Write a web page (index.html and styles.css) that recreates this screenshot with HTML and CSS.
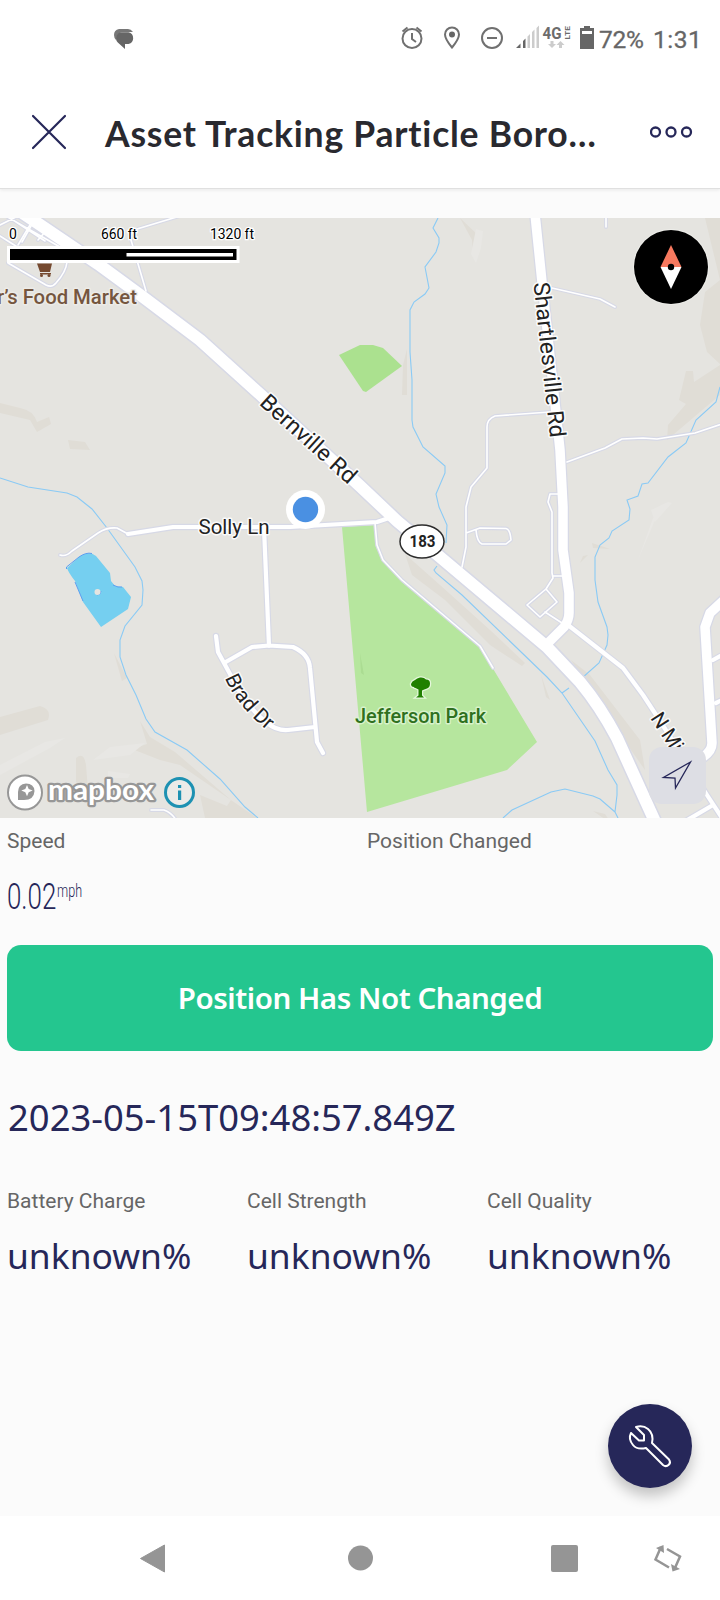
FILE: index.html
```html
<!DOCTYPE html>
<html lang="en">
<head>
<meta charset="utf-8">
<title>Asset Tracking</title>
<link rel="stylesheet" href="styles.css">
</head>
<body>
<header class="top">
  <div class="status">
    <svg class="status-icons" viewBox="0 0 599 76" width="599" height="76">
      <path class="faded" d="M119 29h9q3 0 5 3h-11q-5 1-6 8-2-2-2-5 0-5 5-6z"/>
      <path class="solid" d="M122.500 32.300h6a6 6 0 0 1 0 11.700h-3.500v5l-7.200-6.500a6 6 0 0 1 4.700-10.200z"/>
      <g class="line">
        <circle cx="412" cy="38.500" r="9.500"/><path d="M412 33v6l4 3M402.500 31.500l5-4M421.500 31.500l-5-4"/>
        <path d="M452 47.500q-7-8.500-7-13a7 7 0 0 1 14 0q0 4.500-7 13z"/>
        <circle cx="492" cy="38" r="10"/><path d="M487 38h10"/>
      </g>
      <circle class="solid" cx="452" cy="34.500" r="3"/>
      <path class="solid" d="M516 48l4.500-4.500v4.500zM523 48v-7l2.500-2.500v9.500z"/>
      <path class="pale" d="M527.500 48V36.500l2.500-2.500v14zM532 48V32l2.500-2.500v18.500zM536.500 48V28l2.500-2.500v22.500z"/>
      <text class="net" x="542.500" y="38.500" textLength="19" lengthAdjust="spacingAndGlyphs">4G</text>
      <text class="lte" transform="translate(569.500 39.500) rotate(-90)" textLength="13.500" lengthAdjust="spacingAndGlyphs">LTE</text>
      <path class="pale" d="M550.500 41h3v3h2.500l-4 4-4-4h2.500zM559 48h3v-3h2.500l-4-4-4 4h2.500z"/>
      <path class="solid" fill-rule="evenodd" d="M584 26h6v2h4v21h-14V28h4zM582 31v3h10v-3z"/>
    </svg>
    <span class="battery">72%</span>
    <span class="clock">1:31</span>
  </div>
  <div class="titlebar">
    <svg class="close" viewBox="0 0 36 36" width="36" height="36"><path d="M2 2l32 32M34 2L2 34"/></svg>
    <h1>Asset Tracking Particle Boro…</h1>
    <svg class="more" viewBox="0 0 44 12" width="44" height="12"><circle cx="5.500" cy="6" r="4.500"/><circle cx="21" cy="6" r="4.500"/><circle cx="36.500" cy="6" r="4.500"/></svg>
  </div>
</header>
<main>
  <section class="map">
    <svg viewBox="0 218 720 600" width="720" height="600">
      <defs>
        <g id="highway"><path d="M18 210L30 218 98 264 143 297 200 340 262 396 360 486 397 521 440 557 547 647 580 682 Q600 706 617 738 L657 826"/></g>
        <g id="avenue"><path d="M535 214L542 282 560 450 563 507 563 550 569 593V613Q569 620 564 627L545 646"/></g>
        <g id="east"><path d="M724 600L710 613 705 627 712 743 Q712 751 703 757"/></g>
        <g id="street">
          <path d="M128 534L173 527H290L377 522 392 517M264 528L269 646M216 636L218 652 230 674 Q245 706 267 723 Q277 731 288 730L315 727M224 663L252 647 269 645.500 293 647Q309 654 310 668L317 742 323 753"/>
          <path d="M568 625L623 668 643 695 662 724 707 795 722 818M684 822L713 805M713 660l9-5M716 703l8-4"/>
        </g>
        <g id="lane">
          <path d="M60 555Q66 557 72 551L98 533Q107 527 117 528L128 534M550 412L495 416Q487 419 487 427V468L471 487 466 507V547L462 567M466 533L480 528 506 528.500Q510 529 511 540L506 544H482Q477 542 476 530"/>
          <path d="M567 462L605 448 622 439 643 438 657 439 695 433 722 424M552 288L600 299 615 307M606 216V227M558 494H550L548 502 552 512V573L553 578 546 589 557 602 540 617 527 605 546 589M553 576H562M545 612L562 623"/>
          <path d="M375 523L377 545 383 560 402 580 480 646 493 668M137 229L180 216M131 240L146 291M8 263L46 285Q52 288 56 283Q66 272 67 262M0 236L30 255M4 215L60 247 68 242M18 245L30 225M0 225L20 215M10 218L45 241"/>
          <path d="M151 810H164Q172 813 176 820M22 242l9-16M38 240l7-8"/>
        </g>
      </defs>
      <rect class="land" y="218" width="720" height="600"/>
      <g class="hill">
        <path d="M0 403L20 408Q33 410 37 422L49 417 51 424 37 432 30 420 0 413zM68 440L85 442 90 450 70 449zM0 717L40 706Q52 709 48 720L0 735zM76 758Q84 751 86 765L88 790 76 782zM140 721L150 737 175 752 231 800 227 806 200 795 205 818H257L180 765 160 760 132 749 147 744zM114 653L127 678 122 681zM460 218L480 237 478 256 473 254 472 240zM407 349V395H402L403 365zM705 218H720V364L707 352 700 325 705 292 720 280zM686 371H693L694 382 720 365V395L667 440 668 425 686 404 679 400zM405 554L440 585 490 630 525 663 522 666 490 645 445 600 412 575zM571 660L590 675 640 740 645 770 610 720zM541 675L550 700 546 697zM592 543L610 549 593 548zM583 556L588 555 580 563zM593 811L605 814 612 824z"/>
      </g>
      <g class="shine"><path d="M93 760L110 747 145 743 130 755zM0 765L45 742 65 738 50 748 0 775zM638 560L653 518 665 510 655 520zM651 510L668 502 672 503 655 522zM108 771L130 774 128 778H108zM476 229L483 231 481 248 476 263 471 254z"/></g>
      <path class="park small" d="M339 355L360 345H373L383 348 402 366 366 392 363 391z"/>
      <path class="park" d="M342 527L374 525 376 547 383 560 402 581 480 647 537 742 507 770 367 812z"/>
      <path class="parkshade" d="M360 653l4 22-3-2z"/>
      <path class="lake" d="M67 568L79 557Q89 550 96 556L110 573 111 581 115 586 123 587 131 597 128 609 101 627 83 602 75 581Q68 572 67 568z"/>
      <path class="shore" d="M66.500 569V567L79 557Q86 552 92 553.500M113 585l5 2h4M75 582l8 19M97 595q4 0 4-4"/>
      <circle class="land" cx="97.500" cy="592" r="3"/>
      <path class="water" d="M0 478L28 487 67 493 77 497 92 509 107 528 135 567 142 581 143 590 142 605 125 626 120 640V657L126 675 136 695 146 719 155 732 187 750 220 779 245 807 258 818M438 218L433 228 439 238V243L436 252 425 267 429 288 425 294 414 302 410 310V352L412 380V420L413 427 423 447 445 466V473L436 494 439 507 447 525 446 543M437 566L434 570 436 573 462 595 547 677 562 693 595 741 608 770 617 785V795L615 812 618 818M562 693L569 688M582 678L599 663 607 645 608 635 607 627 598 602 595 580V557L600 545 609 538 612 531 629 520 630 509 627 500 638 496 642 484 648 483 668 457 686 443 696 420 716 402 720 387M503 818L512 810 551 792 565 789 593 796 600 799 615 812"/>
      <use href="#lane" class="case c4"/><use href="#street" class="case c6"/><use href="#highway" class="case c14"/><use href="#avenue" class="case c11"/><use href="#east" class="case c11"/>
      <use href="#lane" class="road r2"/><use href="#street" class="road r4"/><use href="#highway" class="road r11"/><use href="#avenue" class="road r9"/><use href="#east" class="road r9"/>
      <path id="brad" fill="none" d="M225 678Q236 706 275 737"/>
      <g class="label">
        <text transform="translate(258.500 404) rotate(42)" textLength="121" lengthAdjust="spacingAndGlyphs">Bernville Rd</text>
        <text transform="translate(533.500 283) rotate(83.900)" textLength="156" lengthAdjust="spacingAndGlyphs">Shartlesville Rd</text>
        <text class="flat" x="198.500" y="534" textLength="71" lengthAdjust="spacingAndGlyphs">Solly Ln</text>
        <text class="flat"><textPath href="#brad" textLength="68" lengthAdjust="spacingAndGlyphs">Brad Dr</textPath></text>
        <text class="flat" transform="translate(650 718) rotate(57)" textLength="42">N Mi</text>
        <text class="green" x="355" y="722.500" textLength="131" lengthAdjust="spacingAndGlyphs">Jefferson Park</text>
        <text class="brown" x="-3" y="303.500" textLength="140" lengthAdjust="spacingAndGlyphs">r’s Food Market</text>
      </g>
      <path class="tree" d="M414 687q-3 0-3-3 1-3 4-4 2-2 5-2.500 4-0.500 6 2 4 0 4 4 0 4-3 5-3 1-5 2v5l2 2h-8l2.500-2v-6l-3-1.500q-1.500 0-1.500-1z"/>
      <path class="cart" d="M37 263.500h15l-2 8.500H40zM40 273h11v1.500H40z"/><circle class="cart" cx="41.500" cy="275.500" r="1.500"/><circle class="cart" cx="49" cy="275.500" r="1.500"/>
      <rect class="shield" x="400" y="525" width="44" height="33" rx="22" ry="16.500"/>
      <text class="route" x="422.500" y="547" textLength="26" lengthAdjust="spacingAndGlyphs">183</text>
      <circle fill="#fff" cx="305.500" cy="509.500" r="19.500"/><circle fill="#4a90e2" cx="305.500" cy="509.500" r="12.700"/>
      <g class="scale">
        <text x="9" y="239">0</text><text x="101" y="239" textLength="36">660 ft</text><text x="210" y="239" textLength="44">1320 ft</text>
        <path fill="#fff" d="M7 246h232.500v17H7z"/><path d="M10 249h226.500v11H10z"/><path fill="#fff" d="M126.500 253H233v3.500H126.500z"/>
      </g>
      <circle class="compass" cx="671" cy="267" r="37"/>
      <path fill="#f7795f" d="M671 245l10.500 22h-21z"/><path fill="#fff" d="M671 289l10.500-22h-21z"/><circle cx="671" cy="267" r="3.200"/>
      <g class="brand">
        <circle cx="25" cy="792.500" r="17"/>
        <path d="M18 800v-8q0-8 8-8.500 8 0 8.500 7.500-0.500 9-10.500 9z" fill="#979797"/><path fill="#fff" d="M27 785l1.700 4 4 1.600-4 1.600-1.700 4-1.700-4-4-1.600 4-1.600z"/>
        <text x="48" y="800" textLength="106" lengthAdjust="spacingAndGlyphs">mapbox</text>
      </g>
      <circle class="info" cx="179.500" cy="792.500" r="14"/><path fill="#1d91b2" d="M178 785h3.200v3H178zM178 790.500h3.200v9.500H178z"/>
    </svg>
    <button class="locate" aria-label="Center map"><svg viewBox="0 0 57 57" width="57" height="57"><path d="M41.500 15L14.500 30.500 26 31 26.500 41z"/></svg></button>
  </section>
  <section class="row halves">
    <div><p class="label-text">Speed</p><p class="speed"><span class="num">0.02</span><span class="unit">mph</span></p></div>
    <div><p class="label-text">Position Changed</p></div>
  </section>
  <div class="banner"><span>Position Has Not Changed</span></div>
  <p class="stamp">2023-05-15T09:48:57.849Z</p>
  <section class="row thirds">
    <div><p class="label-text">Battery Charge</p><p class="value">unknown%</p></div>
    <div><p class="label-text">Cell Strength</p><p class="value">unknown%</p></div>
    <div><p class="label-text">Cell Quality</p><p class="value">unknown%</p></div>
  </section>
  <button class="fab" aria-label="Tools"><svg viewBox="0 0 84 84" width="84" height="84"><path d="M28 23q7-2 12 2 6 5 4 14L61 55.500q2 3 0 5-3 3-6 0.500L38 44q-9 2-13-3-5-6-2-12l8 7.500h5v-5.500z"/></svg></button>
</main>
<nav>
  <svg viewBox="0 0 720 84" width="720" height="84">
    <path d="M164.500 29v27L140.500 42.500z" stroke="#959595" stroke-linejoin="round"/><circle cx="360.500" cy="42" r="12.500"/><rect x="551" y="29" width="27" height="27" rx="2"/>
    <g class="rotate"><path d="M669 51.500L655.500 43.500 661 31M667 33L680 40.500 674.500 53"/></g><path d="M656 32l7.500-3 .5 8zM671 48l1.500 7.500 7.500-2.500z"/>
  </svg>
</nav>
</body>
</html>
```
FILE: styles.css
```css
* { box-sizing: border-box; }
body { margin: 0; width: 720px; height: 1600px; display: flex; flex-direction: column; background: #fbfbfb; font-family: Roboto, sans-serif; overflow: hidden; }
p, h1 { margin: 0; white-space: nowrap; }
button { border: 0; padding: 0; }
svg { display: block; flex: none; }
.top { height: 189px; flex: none; background: #fff; border-bottom: 1px solid #e0e0e0; box-shadow: 0 1px 3px #e8e8e8; }
.status { height: 76px; display: flex; align-items: center; color: #666; font-size: 24.500px; }
.status span { padding-top: 2px; font-weight: 400; -webkit-text-stroke: .3px #666; }
.battery { width: 54px; letter-spacing: -.3px; }
.clock { letter-spacing: .5px; }
.solid { fill: #666; }
.faded { fill: #777; }
.pale { fill: #ccc; }
.line { fill: none; stroke: #707070; stroke-width: 2; }
.net { font-weight: 700; font-size: 16.500px; fill: #6c6c6c; }
.lte { font-weight: 700; font-size: 8px; fill: #6c6c6c; }
.titlebar { height: 112px; display: flex; align-items: center; padding: 0 26px 0 31px; }
.close { fill: none; stroke: #262759; stroke-width: 2.200; stroke-linecap: round; }
h1 { flex: 1; margin-left: 38px; padding-top: 3px; font: 700 35.500px Lato, sans-serif; letter-spacing: .780px; font-variant-ligatures: none; color: #29292f; }
.more { fill: none; stroke: #262759; stroke-width: 2.300; }
main { position: relative; height: 1327px; flex: none; padding-top: 29px; }
.map { position: relative; height: 600px; overflow: hidden; }
.land { fill: #e5e4e0; }
.hill { fill: #e0ddd6; }
.shine { fill: #e8e7e4; }
.park { fill: #b6e69e; }
.park.small { fill: #abe18f; }
.parkshade { fill: #abdc92; }
.lake { fill: #75cff0; }
.shore { fill: none; stroke: #5e9ff0; }
.water { fill: none; stroke: #8acaf5; stroke-width: 1.100; }
.case, .road { fill: none; stroke-linecap: round; stroke-linejoin: round; }
.case { stroke: #d7d9e6; }
.road { stroke: #fff; }
.c4 { stroke-width: 3.800; }
.c6 { stroke-width: 6.500; }
.c11 { stroke-width: 12; }
.c14 { stroke-width: 15; }
.r2 { stroke-width: 1.600; }
.r4 { stroke-width: 4.200; }
.r9 { stroke-width: 9.500; }
.r11 { stroke-width: 12; }
.label text { font-size: 22.500px; fill: #222; stroke: #fff; stroke-opacity: .85; stroke-width: 3; stroke-linejoin: round; paint-order: stroke; }
.label .flat { font-size: 20.500px; }
.label .green { fill: #2f7020; font-weight: 500; font-size: 20.500px; stroke: #dff5d4; }
.label .brown { fill: #75563f; font-weight: 500; font-size: 20.500px; stroke: #eeede9; }
.tree { fill: #208000; stroke: #e4f7da; stroke-width: 2.500; paint-order: stroke; }
.cart { fill: #75492f; }
.shield { fill: #fff; stroke: #2c2c2c; stroke-width: 1.500; }
.route { text-anchor: middle; font-size: 17px; font-weight: 700; fill: #222; }
.scale text { font-size: 14px; stroke: #fff; stroke-width: 2.500; paint-order: stroke; }
.compass { stroke: #eeeeea; stroke-width: 2; paint-order: stroke; }
.brand circle { fill: #fff; stroke: #979797; stroke-width: 2; }
.brand text { font: 700 28px Lato, sans-serif; fill: #fff; stroke: #979797; stroke-width: 4.500; paint-order: stroke; stroke-linejoin: round; }
.info { fill: #ebebe8; stroke: #1d91b2; stroke-width: 3; }
.locate { position: absolute; right: 14px; bottom: 14px; width: 57px; height: 57px; border-radius: 13px; background: #dddee4; }
.locate path { fill: none; stroke: #262759; stroke-width: 1.300; }
.row { display: grid; padding-left: 7px; }
.halves { grid-template-columns: 360px 1fr; height: 127px; padding-top: 10px; }
.thirds { grid-template-columns: 240px 240px 1fr; padding-top: 45px; height: 130px; }
.label-text { font-size: 21px; line-height: 26px; color: #666; }
.speed { display: flex; color: #262759; font-weight: 300; margin-top: 22px; height: 40px; }
.speed span { transform-origin: 0 0; display: block; }
.num { font-size: 37px; line-height: 42px; width: 50px; transform: scaleX(.7); }
.unit { font-size: 18.500px; line-height: 30px; transform: scaleX(.68); }
.banner { height: 106px; margin: 0 7px; padding-bottom: 2px; border-radius: 14px; background: #24c68f; display: flex; align-items: center; justify-content: center; color: #fff; font: 600 29.500px "Noto Sans", sans-serif; letter-spacing: -.45px; }
.stamp { margin: 41px 0 1px 8px; height: 50px; font: 36.400px/50px "Noto Sans", sans-serif; color: #262759; }
.value { margin-top: 16px; font: 35.400px/50px "Noto Sans", sans-serif; color: #262759; }
.fab { position: absolute; left: 608px; top: 1215px; width: 84px; height: 84px; border-radius: 50%; background: #262759; box-shadow: 0 8px 14px #0000003a; }
.fab path { fill: none; stroke: #fff; stroke-width: 2; stroke-linejoin: round; }
nav { height: 84px; flex: none; background: #fff; fill: #959595; }
.rotate { fill: none; stroke: #959595; stroke-width: 2.500; }
```
